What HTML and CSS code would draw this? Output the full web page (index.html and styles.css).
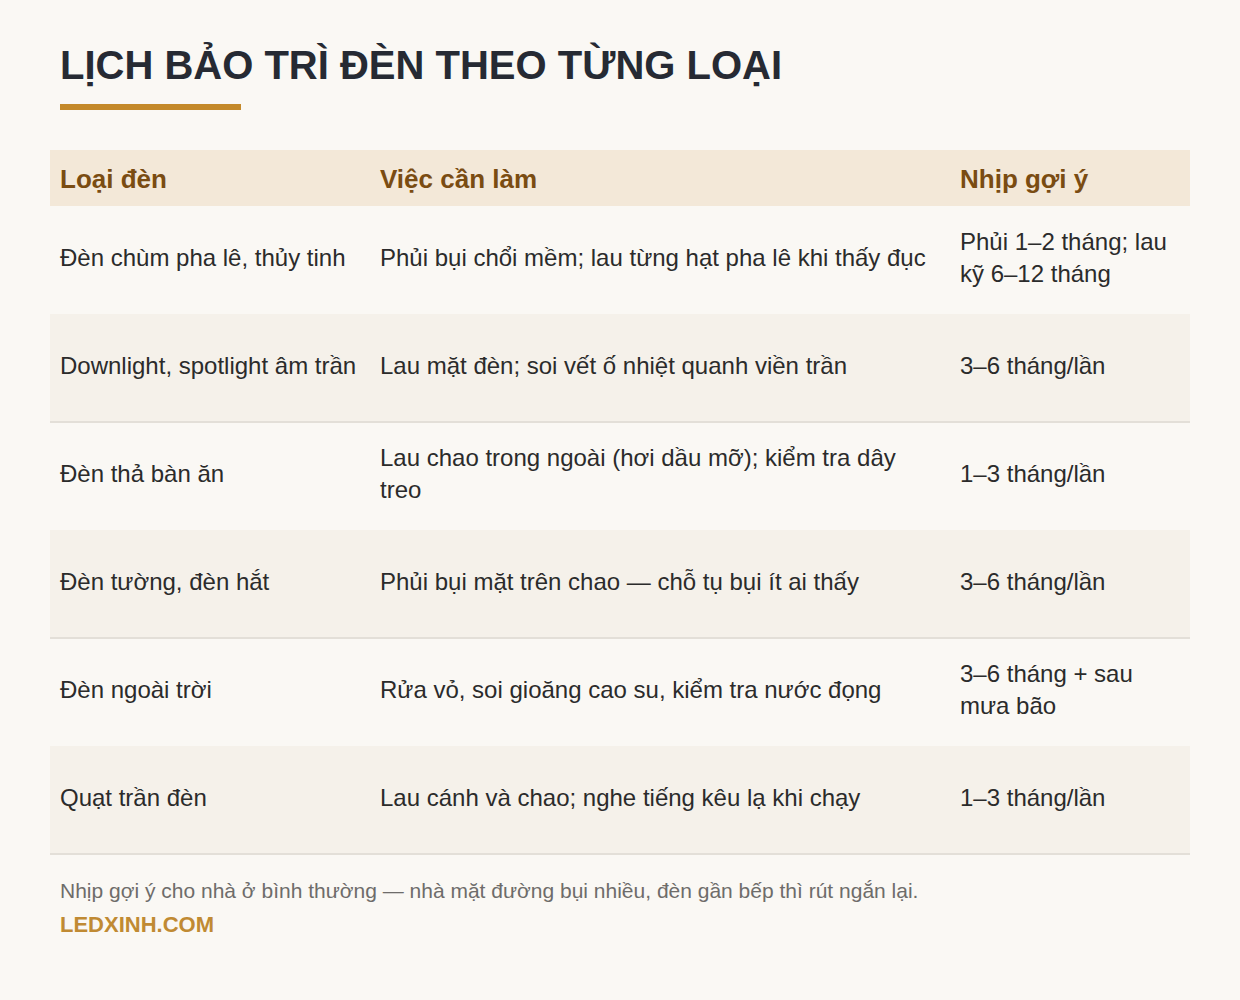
FILE: index.html
```html
<!DOCTYPE html>
<html lang="vi">
<head>
<meta charset="utf-8">
<title>Lịch bảo trì đèn theo từng loại</title>
<link rel="stylesheet" href="styles.css">
</head>
<body>
<main class="page">
  <h1 class="title">LỊCH BẢO TRÌ ĐÈN THEO TỪNG LOẠI</h1>
  <div class="title-bar"></div>
  <table class="schedule">
    <colgroup>
      <col class="c1"><col class="c2"><col class="c3">
    </colgroup>
    <thead>
      <tr><th>Loại đèn</th><th>Việc cần làm</th><th>Nhịp gợi ý</th></tr>
    </thead>
    <tbody>
      <tr><td>Đèn chùm pha lê, thủy tinh</td><td>Phủi bụi chổi mềm; lau từng hạt pha lê khi thấy đục</td><td>Phủi 1–2 tháng; lau kỹ 6–12 tháng</td></tr>
      <tr><td>Downlight, spotlight âm trần</td><td>Lau mặt đèn; soi vết ố nhiệt quanh viền trần</td><td>3–6 tháng/lần</td></tr>
      <tr><td>Đèn thả bàn ăn</td><td>Lau chao trong ngoài (hơi dầu mỡ); kiểm tra dây treo</td><td>1–3 tháng/lần</td></tr>
      <tr><td>Đèn tường, đèn hắt</td><td>Phủi bụi mặt trên chao — chỗ tụ bụi ít ai thấy</td><td>3–6 tháng/lần</td></tr>
      <tr><td>Đèn ngoài trời</td><td>Rửa vỏ, soi gioăng cao su, kiểm tra nước đọng</td><td>3–6 tháng + sau mưa bão</td></tr>
      <tr><td>Quạt trần đèn</td><td>Lau cánh và chao; nghe tiếng kêu lạ khi chạy</td><td>1–3 tháng/lần</td></tr>
    </tbody>
  </table>
  <p class="note">Nhịp gợi ý cho nhà ở bình thường — nhà mặt đường bụi nhiều, đèn gần bếp thì rút ngắn lại.</p>
  <p class="brand">LEDXINH.COM</p>
</main>
</body>
</html>
```

FILE: styles.css
```css
html, body {
  margin: 0;
  padding: 0;
  background: #faf8f4;
}
body {
  font-family: "Liberation Sans", Arial, sans-serif;
  color: #2b2b2b;
}
.page {
  padding: 41px 50px 40px;
}
.title {
  margin: 0;
  padding-left: 10px;
  font-size: 40px;
  line-height: 48px;
  font-weight: 700;
  color: #262a33;
}
.title-bar {
  margin: 15px 0 0 10px;
  width: 181px;
  height: 6px;
  background: #c4892a;
}
.schedule {
  margin-top: 40px;
  width: 100%;
  border-collapse: collapse;
  table-layout: fixed;
}
.c1 { width: 320px; }
.c2 { width: 580px; }
.c3 { width: 240px; }
.schedule th {
  background: #f3e8d8;
  color: #7a4c12;
  font-size: 26px;
  font-weight: 700;
  line-height: 32px;
  text-align: left;
  padding: 13px 10px 11px;
}
.schedule td {
  height: 108px;
  box-sizing: border-box;
  padding: 0 10px 5px;
  font-size: 24px;
  line-height: 32px;
  vertical-align: middle;
  color: #2b2b2b;
}
.schedule tbody tr:nth-child(even) td {
  background: #f5f1ea;
  border-bottom: 2px solid #e3dfd8;
  padding-bottom: 3px;
}
.note {
  margin: 22px 0 0;
  padding-left: 10px;
  font-size: 21px;
  line-height: 28px;
  color: #6e6c6a;
}
.brand {
  margin: 6px 0 0;
  padding-left: 10px;
  font-size: 22px;
  line-height: 28px;
  font-weight: 700;
  color: #c08a33;
}
```
